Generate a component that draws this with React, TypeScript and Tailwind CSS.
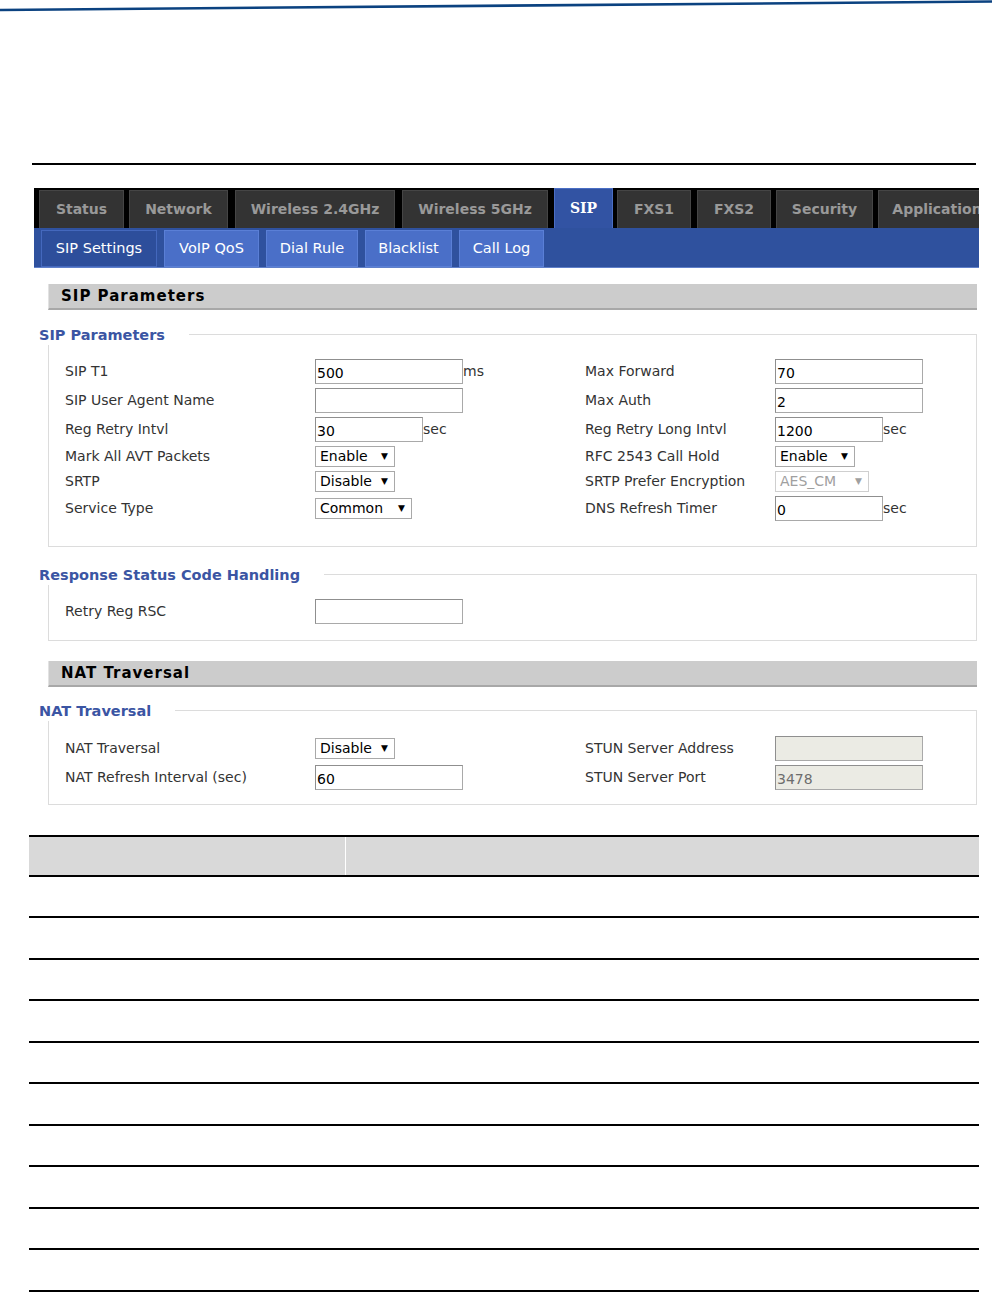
import React from 'react';

const font = "font-['DejaVu_Sans',_'Liberation_Sans',_sans-serif]";

const mainTabs = [
  { label: 'Status', w: 'w-[85px] ml-[5px]' },
  { label: 'Network', w: 'w-[99px] ml-[5px]' },
  { label: 'Wireless 2.4GHz', w: 'w-[160px] ml-[7px]' },
  { label: 'Wireless 5GHz', w: 'w-[146px] ml-[7px]' },
  { label: 'SIP', w: 'w-[59px] ml-[6px]', active: true },
  { label: 'FXS1', w: 'w-[74px] ml-[4px]' },
  { label: 'FXS2', w: 'w-[74px] ml-[6px]' },
  { label: 'Security', w: 'w-[97px] ml-[5px]' },
  { label: 'Application', w: 'w-[118px] ml-[5px]' },
];

const subTabs = [
  { label: 'SIP Settings', w: 'w-[116px]', active: true },
  { label: 'VoIP QoS', w: 'w-[95px]' },
  { label: 'Dial Rule', w: 'w-[92px]' },
  { label: 'Blacklist', w: 'w-[87px]' },
  { label: 'Call Log', w: 'w-[85px]' },
];

type Field =
  | { kind: 'input'; value?: string; unit?: string; short?: boolean; disabled?: boolean }
  | { kind: 'select'; value: string; w: string; disabled?: boolean }
  | null;

function Control({ field }: { field: Field }) {
  if (!field) return null;
  if (field.kind === 'select') {
    return (
      <div
        className={`h-[21px] ${field.w} border flex items-center justify-between pl-[4px] pr-[6px] text-[14px] ${
          field.disabled ? 'border-[#cfcfcf] text-[#a0a0a0]' : 'border-[#a9a9a9] text-black'
        }`}
      >
        <span>{field.value}</span>
        <span className="text-[9px]">▼</span>
      </div>
    );
  }
  return (
    <div className="flex items-center">
      <div
        className={`h-[25px] ${field.short ? 'w-[108px]' : 'w-[148px]'} border border-[#a9a9a9] border-t-[#8f8f8f] border-l-[#8f8f8f] flex items-end pl-[1px] text-[14px] leading-[20px] ${
          field.disabled ? 'bg-[#ebebe4] text-[#6d6d6d]' : 'bg-white text-black'
        }`}
      >
        {field.value}
      </div>
      {field.unit && <span className="text-[14px] text-[#333]">{field.unit}</span>}
    </div>
  );
}

type Row = { l: string; lf: Field; r?: string; rf?: Field; h: string };

function Rows({ rows }: { rows: Row[] }) {
  return (
    <div className="flex flex-col">
      {rows.map((row) => (
        <div key={row.l} className={`flex items-center ${row.h}`}>
          <div className="w-[250px] text-[14px] text-[#333]">{row.l}</div>
          <div className="w-[270px]">
            <Control field={row.lf} />
          </div>
          <div className="w-[190px] text-[14px] text-[#333]">{row.r}</div>
          <div>{row.rf !== undefined && <Control field={row.rf} />}</div>
        </div>
      ))}
    </div>
  );
}

function Legend({ title, pad, children }: { title: string; pad: string; children: React.ReactNode }) {
  return (
    <div className={`relative border border-[#dcdcdc] ${pad}`}>
      <div className="absolute -top-[9px] -left-[10px] bg-white pr-[24px] text-[14.5px] font-bold text-[#3b55a3] leading-[19px]">
        {title}
      </div>
      {children}
    </div>
  );
}

function SectionBar({ title }: { title: string }) {
  return (
    <div className="h-[26px] bg-[#cccccc] border-b-2 border-[#a8a8a8] border-l border-l-[#e2e2e2] flex items-center pl-[12px] text-[15px] font-bold tracking-[1px] text-black">
      {title}
    </div>
  );
}

export default function App() {
  const sipRows: Row[] = [
    { l: 'SIP T1', lf: { kind: 'input', value: '500', unit: 'ms' }, r: 'Max Forward', rf: { kind: 'input', value: '70' }, h: 'h-[29px]' },
    { l: 'SIP User Agent Name', lf: { kind: 'input' }, r: 'Max Auth', rf: { kind: 'input', value: '2' }, h: 'h-[29px]' },
    { l: 'Reg Retry Intvl', lf: { kind: 'input', value: '30', unit: 'sec', short: true }, r: 'Reg Retry Long Intvl', rf: { kind: 'input', value: '1200', unit: 'sec', short: true }, h: 'h-[29px]' },
    { l: 'Mark All AVT Packets', lf: { kind: 'select', value: 'Enable', w: 'w-[80px]' }, r: 'RFC 2543 Call Hold', rf: { kind: 'select', value: 'Enable', w: 'w-[80px]' }, h: 'h-[25px]' },
    { l: 'SRTP', lf: { kind: 'select', value: 'Disable', w: 'w-[80px]' }, r: 'SRTP Prefer Encryption', rf: { kind: 'select', value: 'AES_CM', w: 'w-[94px]', disabled: true }, h: 'h-[25px]' },
    { l: 'Service Type', lf: { kind: 'select', value: 'Common', w: 'w-[97px]' }, r: 'DNS Refresh Timer', rf: { kind: 'input', value: '0', unit: 'sec', short: true }, h: 'h-[29px]' },
  ];

  const rscRows: Row[] = [{ l: 'Retry Reg RSC', lf: { kind: 'input' }, h: 'h-[29px]' }];

  const natRows: Row[] = [
    { l: 'NAT Traversal', lf: { kind: 'select', value: 'Disable', w: 'w-[80px]' }, r: 'STUN Server Address', rf: { kind: 'input', disabled: true }, h: 'h-[29px]' },
    { l: 'NAT Refresh Interval (sec)', lf: { kind: 'input', value: '60' }, r: 'STUN Server Port', rf: { kind: 'input', value: '3478', disabled: true }, h: 'h-[29px]' },
  ];

  return (
    <div className={`w-[992px] h-[1293px] bg-white overflow-hidden ${font}`}>
      <svg width="992" height="12" className="block">
        <line x1="0" y1="10" x2="992" y2="1.5" stroke="#0b4280" strokeWidth="2.6" />
      </svg>

      <div className="mt-[151px] ml-[32px] w-[944px] h-[2px] bg-black" />

      <div className="mt-[23px] ml-[34px] w-[945px] overflow-hidden">
        <div className="h-[40px] bg-black flex items-end">
          {mainTabs.map((t) =>
            t.active ? (
              <div
                key={t.label}
                className={`${t.w} shrink-0 h-[40px] bg-[#3253a3] border-t border-x border-[#4a6ec4] flex items-center justify-center text-white font-bold text-[14px] font-['DejaVu_Serif',_serif]`}
              >
                {t.label}
              </div>
            ) : (
              <div
                key={t.label}
                className={`${t.w} shrink-0 h-[38px] bg-[#333333] border-t border-x border-[#454545] flex items-center justify-center text-[#999999] font-bold text-[14px] whitespace-nowrap`}
              >
                {t.label}
              </div>
            )
          )}
        </div>
        <div className="h-[40px] bg-[#2f519e] border-b border-[#5f7fc9] flex items-end gap-[7px] pl-[7px]">
          {subTabs.map((t) => (
            <div
              key={t.label}
              className={`${t.w} shrink-0 h-[37px] border flex items-center justify-center text-white text-[14.5px] ${
                t.active ? 'bg-[#2d4e9b] border-[#4468bd]' : 'bg-[#4a6fc8] border-[#5a7fd6]'
              }`}
            >
              {t.label}
            </div>
          ))}
        </div>
      </div>

      <div className="ml-[48px] w-[929px] mt-[16px]">
        <SectionBar title="SIP Parameters" />
        <div className="mt-[24px]">
          <Legend title="SIP Parameters" pad="pt-[22px] pb-[23px] pl-[16px]">
            <Rows rows={sipRows} />
          </Legend>
        </div>
        <div className="mt-[27px]">
          <Legend title="Response Status Code Handling" pad="pt-[22px] pb-[14px] pl-[16px]">
            <Rows rows={rscRows} />
          </Legend>
        </div>
        <div className="mt-[20px]">
          <SectionBar title="NAT Traversal" />
        </div>
        <div className="mt-[23px]">
          <Legend title="NAT Traversal" pad="pt-[23px] pb-[12px] pl-[16px]">
            <Rows rows={natRows} />
          </Legend>
        </div>
      </div>

      <div className="ml-[29px] w-[950px] mt-[30px] border-t-2 border-black">
        <div className="h-[39.5px] bg-[#d9d9d9] flex border-b-2 border-black">
          <div className="w-[317px] h-full border-r border-white" />
          <div className="flex-1" />
        </div>
        {Array.from({ length: 10 }).map((_, i) => (
          <div key={i} className="h-[41.5px] border-b-2 border-black" />
        ))}
      </div>
    </div>
  );
}
